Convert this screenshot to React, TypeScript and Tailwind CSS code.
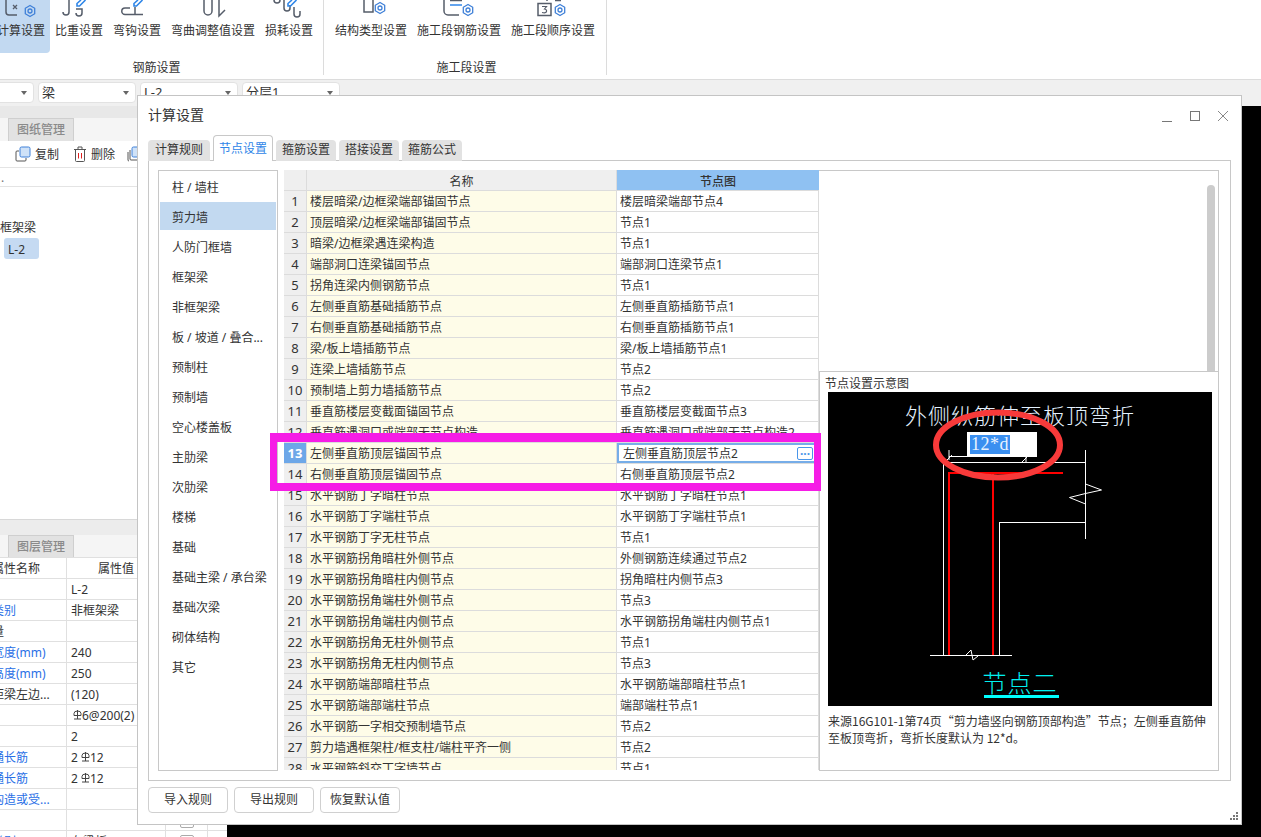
import React from "react"

const categories = ["柱 / 墙柱", "剪力墙", "人防门框墙", "框架梁", "非框架梁", "板 / 坡道 / 叠合...", "预制柱", "预制墙", "空心楼盖板", "主肋梁", "次肋梁", "楼梯", "基础", "基础主梁 / 承台梁", "基础次梁", "砌体结构", "其它"]

const rows: [string, string][] = [
  ["楼层暗梁/边框梁端部锚固节点", "楼层暗梁端部节点4"],
  ["顶层暗梁/边框梁端部锚固节点", "节点1"],
  ["暗梁/边框梁遇连梁构造", "节点1"],
  ["端部洞口连梁锚固节点", "端部洞口连梁节点1"],
  ["拐角连梁内侧钢筋节点", "节点1"],
  ["左侧垂直筋基础插筋节点", "左侧垂直筋插筋节点1"],
  ["右侧垂直筋基础插筋节点", "右侧垂直筋插筋节点1"],
  ["梁/板上墙插筋节点", "梁/板上墙插筋节点1"],
  ["连梁上墙插筋节点", "节点2"],
  ["预制墙上剪力墙插筋节点", "节点2"],
  ["垂直筋楼层变截面锚固节点", "垂直筋楼层变截面节点3"],
  ["垂直筋遇洞口或端部无节点构造", "垂直筋遇洞口或端部无节点构造2"],
  ["左侧垂直筋顶层锚固节点", "左侧垂直筋顶层节点2"],
  ["右侧垂直筋顶层锚固节点", "右侧垂直筋顶层节点2"],
  ["水平钢筋丁字暗柱节点", "水平钢筋丁字暗柱节点1"],
  ["水平钢筋丁字端柱节点", "水平钢筋丁字端柱节点1"],
  ["水平钢筋丁字无柱节点", "节点1"],
  ["水平钢筋拐角暗柱外侧节点", "外侧钢筋连续通过节点2"],
  ["水平钢筋拐角暗柱内侧节点", "拐角暗柱内侧节点3"],
  ["水平钢筋拐角端柱外侧节点", "节点3"],
  ["水平钢筋拐角端柱内侧节点", "水平钢筋拐角端柱内侧节点1"],
  ["水平钢筋拐角无柱外侧节点", "节点1"],
  ["水平钢筋拐角无柱内侧节点", "节点3"],
  ["水平钢筋端部暗柱节点", "水平钢筋端部暗柱节点1"],
  ["水平钢筋端部端柱节点", "端部端柱节点1"],
  ["水平钢筋一字相交预制墙节点", "节点2"],
  ["剪力墙遇框架柱/框支柱/端柱平齐一侧", "节点2"],
  ["水平钢筋斜交丁字墙节点", "节点1"],
]

const Rebar = () => (
  <svg width="9" height="10" viewBox="0 0 9 10" className="mb-[3px] inline-block" fill="none" stroke="#444" strokeWidth="1">
    <path d="M1 5.5V3.5a3.5 2.5 0 0 1 7 0v2zM4.500 0v9M1 9h7" />
  </svg>
)

const props: { name: string; value: React.ReactNode; blue?: boolean }[] = [
  { name: "名称", value: "L-2" },
  { name: "结构类别", value: "非框架梁", blue: true },
  { name: "跨数量", value: "" },
  { name: "截面宽度(mm)", value: "240", blue: true },
  { name: "截面高度(mm)", value: "250", blue: true },
  { name: "轴线距梁左边...", value: "(120)" },
  { name: "箍筋", value: <span className="pl-[2px] whitespace-nowrap"><Rebar />6@200(2)</span> },
  { name: "肢数", value: "2" },
  { name: "上部通长筋", value: <span className="whitespace-nowrap">2 <Rebar />12</span>, blue: true },
  { name: "下部通长筋", value: <span className="whitespace-nowrap">2 <Rebar />12</span>, blue: true },
  { name: "侧面构造或受...", value: "", blue: true },
  { name: "拉筋", value: "" },
  { name: "定额类别", value: "有梁板", blue: true },
]

const Gear = ({ cx, cy }: { cx: number; cy: number }) => (
  <g fill="none" stroke="#3f80d8" strokeWidth="1.300">
    <path d={`M${cx} ${cy - 5.5}l4.700 2.700v5.600l-4.700 2.700-4.700-2.700v-5.600z`} strokeLinejoin="round" />
    <circle cx={cx} cy={cy} r="2" />
  </g>
)

const Pencil = ({ x }: { x: number }) => (
  <path d={`M${x + 4} 0l-4 3.500v2.500h2.500l6-6`} fill="none" stroke="#2f86e8" strokeWidth="1.600" />
)

const gray = { fill: "none", stroke: "#565d6a", strokeWidth: 1.500 }

const ribbonIcons: Record<string, React.ReactNode> = {
  计算设置: (
    <>
      <path d="M6 0v12a3 3 0 0 0 3 3h8" {...gray} />
      <path d="M13 5l4 4M17 5l-4 4" fill="none" stroke="#565d6a" strokeWidth="1.300" />
      <Gear cx={30} cy={11} />
    </>
  ),
  比重设置: (
    <>
      <path d="M69 0v12a3 3 0 0 1-6 0" {...gray} />
      <path d="M76 9h6v4a3 3 0 0 1-6 0" {...gray} />
      <Pencil x={77} />
    </>
  ),
  弯钩设置: (
    <>
      <path d="M130 8h-5a3 3 0 0 0 0 6.500h18M135 7v7" {...gray} />
      <Pencil x={134} />
    </>
  ),
  弯曲调整值设置: <path d="M204 0v11a4 4 0 0 0 8 0V0M219 0v16l6-6" {...gray} />,
  损耗设置: (
    <>
      <path d="M274 0a3 3 0 0 0 6 0M284 0v8a3 3 0 0 0 6 0V5M294 7v7a3 3 0 0 0 6 0v-3" {...gray} />
      <Pencil x={288} />
    </>
  ),
  结构类型设置: (
    <>
      <path d="M364 0v12h9V0" {...gray} />
      <Gear cx={380} cy={8} />
    </>
  ),
  施工段钢筋设置: (
    <>
      <path d="M444 0v11a4 4 0 0 0 4 4h11" {...gray} />
      <path d="M450 5h12" fill="none" stroke="#2f86e8" strokeWidth="1.500" />
      <path d="M450 .5h12" {...gray} />
      <Gear cx={468} cy={10} />
    </>
  ),
  施工段顺序设置: (
    <>
      <path d="M538 3.500h13v12h-13zM547 0v1M555 0.500h6" {...gray} />
      <path d="M542 6.500h4.500l-2 2.500q2.500 .5 2 2.500t-4.500 1" fill="none" stroke="#565d6a" strokeWidth="1.200" />
      <Gear cx={560} cy={10} />
    </>
  ),
}

function RibbonButton({ label, left, active }: { label: string; left: number; active?: boolean }) {
  const width = label.length * 12 + 10
  return (
    <div className={`flex h-[53px] flex-col items-center rounded-br px-[5px] ${active ? "bg-[#c2d9f1]" : ""}`}>
      <svg width={width} height="18" viewBox={`${left - 5} 0 ${width} 18`} className="-mx-[5px] shrink-0">
        {ribbonIcons[label]}
      </svg>
      <span className="mt-[5px] text-xs leading-4 whitespace-nowrap text-[#333]">{label}</span>
    </div>
  )
}

function Dropdown({ label, width }: { label: string; width: string }) {
  return (
    <div className={`flex h-[21px] items-center justify-between rounded border border-[#e2e2e2] bg-white pr-[6px] pl-[3px] text-[13px] text-[#333] ${width}`}>
      <span>{label}</span>
      <span className="border-x-[3px] border-t-[4px] border-x-transparent border-t-[#666]" />
    </div>
  )
}

function Diagram() {
  return (
    <div className="relative mt-[1px] ml-[7px] h-[314px] w-[384px] shrink-0 overflow-hidden bg-black">
      <svg width="384" height="314" viewBox="828 392 384 314" className="absolute inset-0" fill="none" shapeRendering="crispEdges">
        <g stroke="#fff" strokeWidth="1">
          <path d="M943.500 463v192M999.500 522v133M999 522.500h87M1085.500 450v89M943 462.500h142M930 655.500h82M949 456.500h78" />
        </g>
        <g stroke="#fff" strokeWidth="1" shapeRendering="auto">
          <path d="M1085.500 484l16 6-16 3.500-16 4 16 6.500M966 655l5-5 2 10 5-4M949 450v10M946 461l6-6M1026 456v6M1022 462l5-5" />
        </g>
        <g stroke="#f00" strokeWidth="2">
          <path d="M949 472v183M993 472v183M948 473h115" />
        </g>
      </svg>
      <div className="absolute top-[11px] left-0 w-full text-center font-['Liberation_Serif','Noto_Sans_CJK_SC',serif] text-[22px] leading-7 font-light tracking-[1px] text-[#e4f2ff]">
        外侧纵筋伸至板顶弯折
      </div>
      <div className="absolute top-[40px] left-[139px] flex h-[25px] w-[70px] items-center bg-white pl-[3px]">
        <span className="bg-[#3a8ff0] px-[1px] font-['Liberation_Serif',serif] text-[18px] leading-[19px] tracking-[0.5px] text-[#e8f2ff]">12*d</span>
      </div>
      <svg width="384" height="314" viewBox="828 392 384 314" className="absolute inset-0" fill="none">
        <ellipse cx="998" cy="445" rx="62" ry="32.500" stroke="#f83a3a" strokeWidth="6" />
      </svg>
      <div className="absolute top-[275px] left-0 w-full text-center text-[24px] leading-8 font-light tracking-[1px] text-[#00f0f0]">节点二</div>
      <div className="absolute top-[303px] left-[156px] h-[3px] w-[75px] bg-[#00ffff]" />
    </div>
  )
}

export default function App() {
  return (
    <div className="relative flex h-[837px] w-[1261px] flex-col overflow-hidden bg-black font-['Noto_Sans','Noto_Sans_CJK_SC',sans-serif] text-xs text-[#333]">
      {/* ribbon */}
      <div className="flex h-[80px] shrink-0 border-b border-[#dcdcdc] bg-white">
        <div className="-ml-[8px] flex h-[75px] flex-col items-center border-r border-[#dcdcdc] pr-[5px]">
          <div className="flex">
            <RibbonButton label="计算设置" left={-3} active />
            <RibbonButton label="比重设置" left={55} />
            <RibbonButton label="弯钩设置" left={113} />
            <RibbonButton label="弯曲调整值设置" left={171} />
            <RibbonButton label="损耗设置" left={265} />
          </div>
          <span className="mt-[6px] ml-[3px] leading-[18px]">钢筋设置</span>
        </div>
        <div className="flex h-[75px] flex-col items-center border-r border-[#dcdcdc] pr-[6px] pl-[6px]">
          <div className="flex">
            <RibbonButton label="结构类型设置" left={335} />
            <RibbonButton label="施工段钢筋设置" left={417} />
            <RibbonButton label="施工段顺序设置" left={511} />
          </div>
          <span className="mt-[6px] ml-[3px] leading-[18px]">施工段设置</span>
        </div>
      </div>

      {/* selector bar */}
      <div className="flex h-[26px] shrink-0 gap-[4px] bg-[#f0f0f0] pt-[2px]">
        <Dropdown label="" width="-ml-[60px] w-[94px]" />
        <Dropdown label="梁" width="w-[98px]" />
        <Dropdown label="L-2" width="w-[98px]" />
        <Dropdown label="分层1" width="w-[98px]" />
      </div>

      <div className="flex min-h-0 flex-1">
        {/* left panel */}
        <div className="flex w-[227px] shrink-0 flex-col overflow-hidden bg-white">
          <div className="h-[12px] shrink-0 bg-[#e8e8e8]" />
          <div className="flex h-[23px] shrink-0 bg-[#f5f5f5] pl-[8px]">
            <div className="flex w-[66px] items-center justify-center border border-b-0 border-[#cfcfcf] bg-[#e2e2e2] font-medium text-[#8a8a8a]">图纸管理</div>
          </div>
          <div className="flex h-[27px] shrink-0 items-center border-b border-[#e4e4e4] pl-[15px]">
            <svg width="16" height="16" viewBox="0 0 16 16" fill="none">
              <rect x="5" y="1" width="10" height="10" rx="1.500" fill="#cfe2f8" stroke="#3f80d8" />
              <path d="M4 5H2a1 1 0 0 0-1 1v8a1 1 0 0 0 1 1h8a1 1 0 0 0 1-1v-2" stroke="#555" />
            </svg>
            <span className="mt-[2px] ml-[4px]">复制</span>
            <svg width="14" height="16" viewBox="0 0 14 16" fill="none" className="ml-[14px]">
              <path d="M1 3.500h12M5 3V1h4v2M2.500 4v10.500a1 1 0 0 0 1 1h7a1 1 0 0 0 1-1V4" stroke="#555" />
              <path d="M5.500 7v5.500M8.500 7v5.500" stroke="#e02020" />
            </svg>
            <span className="mt-[2px] ml-[4px]">删除</span>
            <svg width="16" height="16" viewBox="0 0 16 16" fill="none" className="ml-[12px]">
              <rect x="5" y="1" width="10" height="10" rx="1.500" fill="#cfe2f8" stroke="#3f80d8" />
              <path d="M3 4v9a1 1 0 0 0 1 1h8M1 6v8a1 1 0 0 0 1 1" stroke="#555" />
            </svg>
          </div>
          <div className="h-[19px] shrink-0 border-b border-[#e4e4e4] pl-[1px] leading-[20px] text-[#777]">.</div>
          <div className="h-[332px] shrink-0 pt-[32px]">
            <div className="leading-[17px]">框架梁</div>
            <div className="mt-[2px] ml-[4px] flex h-[21px] w-[35px] items-center rounded-[3px] bg-[#c5daf2] pt-[2px] pl-[4px]">L-2</div>
          </div>
          <div className="h-[16px] shrink-0 border-t border-[#d8d8d8] bg-[#ececec]" />
          <div className="flex h-[22px] shrink-0 bg-[#f5f5f5] pl-[8px]">
            <div className="flex w-[66px] items-center justify-center border border-b-0 border-[#cfcfcf] bg-[#e2e2e2] font-medium text-[#8a8a8a]">图层管理</div>
          </div>
          <div className="grid h-[21px] shrink-0 grid-cols-[66px_99px_42px_20px] border-t border-[#e0e0e0]">
            <div className="-ml-[8px] leading-[22px] whitespace-nowrap">属性名称</div>
            <div className="border-l border-[#e0e0e0] text-center leading-[22px]">属性值</div>
            <div className="border-l border-[#e0e0e0]" />
            <div className="border-l border-[#e0e0e0]" />
          </div>
          {props.map((p) => (
            <div key={p.name} className="grid h-[21px] shrink-0 grid-cols-[66px_99px_42px_20px] border-t border-[#e0e0e0]">
              <div className={`-ml-[32px] leading-[22px] whitespace-nowrap ${p.blue ? "text-[#2a6fe6]" : ""}`}>{p.name}</div>
              <div className="overflow-hidden border-l border-[#e0e0e0] pl-[4px] leading-[22px]">{p.value}</div>
              <div className="flex items-center justify-center border-l border-[#e0e0e0]">
                <span className="size-[14px] rounded-[2px] border border-[#aaa] bg-white" />
              </div>
              <div className="border-l border-[#e0e0e0]" />
            </div>
          ))}
        </div>
      </div>

      {/* dialog */}
      <div className="absolute top-[95px] left-[137px] flex h-[730px] w-[1105px] flex-col border border-[#c4c4c4] bg-white">
        <div className="flex h-[39px] shrink-0 items-center justify-between pr-[13px] pl-[10px] text-sm">
          <span className="mb-[2px]">计算设置</span>
          <div className="flex items-center gap-[18px]">
            <svg width="10" height="10" viewBox="0 0 10 10" stroke="#777" className="translate-y-[1px]"><path d="M0 9.500h10" /></svg>
            <svg width="10" height="10" viewBox="0 0 10 10" stroke="#777" fill="none"><rect x=".5" y=".5" width="9" height="9" /></svg>
            <svg width="10" height="10" viewBox="0 0 10 10" stroke="#888" fill="none"><path d="M0 0l10 10M10 0L0 10" /></svg>
          </div>
        </div>
        <div className="relative z-10 -mb-px flex h-[26px] shrink-0 items-end pl-[10px]">
          <div className="mr-[3px] flex h-[21px] w-[62px] items-center justify-center rounded-t bg-[#e2e2e2] pb-[2px]">计算规则</div>
          <div className="mr-[3px] flex h-[26px] w-[60px] items-center justify-center rounded-t border border-b-0 border-[#c8c8c8] bg-white text-[#2f86e8]">节点设置</div>
          <div className="mr-[3px] flex h-[21px] w-[60px] items-center justify-center rounded-t bg-[#e2e2e2] pb-[2px]">箍筋设置</div>
          <div className="mr-[3px] flex h-[21px] w-[60px] items-center justify-center rounded-t bg-[#e2e2e2] pb-[2px]">搭接设置</div>
          <div className="flex h-[21px] w-[60px] items-center justify-center rounded-t bg-[#e2e2e2] pb-[2px]">箍筋公式</div>
        </div>
        <div className="mx-[10px] flex h-[621px] shrink-0 border border-[#c8c8c8] p-[9px]">
          <div className="flex w-[120px] shrink-0 flex-col gap-[2px] border border-[#c8c8c8] px-[1px] pt-[1px]">
            {categories.map((c) => (
              <div key={c} className={`flex h-[28px] shrink-0 items-center pt-[4px] pl-[12px] whitespace-nowrap ${c === "剪力墙" ? "bg-[#c2d9f0]" : ""}`}>{c}</div>
            ))}
          </div>
          <div className="ml-[6px] h-[600px] w-[535px] shrink-0 overflow-hidden">
            <div className="flex h-[21px] border-b border-[#dcdcdc] bg-[#efefef]">
              <div className="w-[23px] border-r border-[#dcdcdc]" />
              <div className="w-[310px] border-r border-[#dcdcdc] pt-[1px] text-center leading-[22px]">名称</div>
              <div className="w-[202px] bg-[#8fc1f2] pt-[1px] text-center leading-[22px] font-medium">节点图</div>
            </div>
            {rows.map(([name, node], i) => {
              const on = i === 12
              return (
                <div key={name} className="flex h-[21px] border-b border-[#dcdcdc]">
                  <div className={`flex w-[23px] shrink-0 items-center justify-center border-r border-[#dcdcdc] pt-[2px] text-[13px] ${on ? "bg-[#6da7e8] font-bold text-white" : "bg-[#efefef]"}`}>{i + 1}</div>
                  <div className="w-[310px] shrink-0 truncate border-r border-[#dcdcdc] bg-[#fefce8] pl-[3px] leading-[22px]">{name}</div>
                  {on ? (
                    <div className="flex w-[202px] shrink-0 items-center justify-between border-2 border-[#76ade8] pt-[1px] pr-[4px] pl-[4px]">
                      <span>{node}</span>
                      <span className="flex h-[13px] w-[16px] items-center justify-center rounded-[2px] border border-[#4a96ea] pb-[5px] font-bold text-[#4a96ea]">...</span>
                    </div>
                  ) : (
                    <div className="w-[202px] shrink-0 truncate border-r border-[#dcdcdc] pl-[3px] leading-[22px]">{node}</div>
                  )}
                </div>
              )
            })}
          </div>
          <div className="flex h-[601px] w-[400px] shrink-0 flex-col border border-l-0 border-[#c8c8c8]">
            <div className="flex h-[200px] shrink-0 justify-end pt-[14px] pr-[3px]">
              <div className="h-[186px] w-[8px] rounded-t bg-[#cccccc]" />
            </div>
            <div className="flex min-h-0 flex-1 flex-col border-t border-l border-[#c8c8c8]">
              <div className="h-[19px] shrink-0 pl-[5px] leading-[24px]">节点设置示意图</div>
              <div className="pl-[1px]"><Diagram /></div>
              <p className="mt-[6px] ml-[8px] w-[386px] font-['Noto_Sans_CJK_SC',sans-serif] leading-[17px]">来源16G101-1第74页“剪力墙竖向钢筋顶部构造”节点；左侧垂直筋伸至板顶弯折，弯折长度默认为 12*d。</p>
            </div>
          </div>
        </div>
        <div className="mt-[6px] flex gap-[6px] pl-[10px]">
          {["导入规则", "导出规则", "恢复默认值"].map((b) => (
            <div key={b} className="flex h-[26px] w-[80px] items-center justify-center rounded border border-[#d0d0d0]">{b}</div>
          ))}
        </div>
        <svg width="9" height="9" viewBox="0 0 9 9" fill="#777" className="absolute right-[3px] bottom-[3px]">
          <path d="M7 0h2v2H7zM4 3h2v2H4zM7 3h2v2H7zM1 6h2v2H1zM4 6h2v2H4zM7 6h2v2H7z" />
        </svg>
      </div>

      {/* annotation */}
      <div className="pointer-events-none absolute top-[433px] left-[270px] h-[58px] w-[551px] border-x-[7px] border-t-[9px] border-b-[8px] border-[#f61ce6]" />
    </div>
  )
}
